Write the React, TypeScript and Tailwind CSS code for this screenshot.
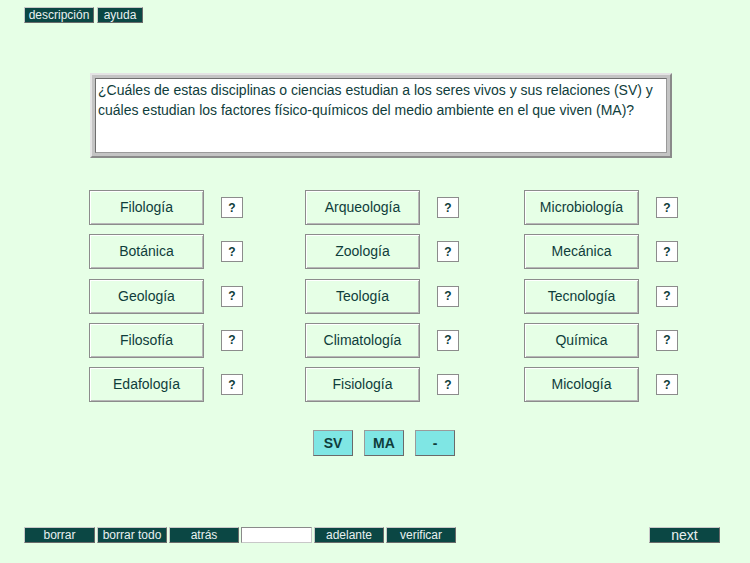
const rows: [string, string, string][] = [
  ['Filología', 'Arqueología', 'Microbiología'],
  ['Botánica', 'Zoología', 'Mecánica'],
  ['Geología', 'Teología', 'Tecnología'],
  ['Filosofía', 'Climatología', 'Química'],
  ['Edafología', 'Fisiología', 'Micología'],
];

const font = { fontFamily: '"Liberation Sans", Arial, sans-serif' };

function NavButton({ label, w }: { label: string; w: string }) {
  return (
    <div
      className={`${w} h-[16px] flex items-center justify-center bg-[#0b4744] text-[#e8f0f0] text-[12px] leading-none border border-t-[#c8c8c8] border-l-[#c8c8c8] border-b-[#6a6a6a] border-r-[#6a6a6a]`}
    >
      {label}
    </div>
  );
}

function Choice({ label }: { label: string }) {
  return (
    <div className="flex items-center gap-[17px]">
      <div className="w-[115px] h-[35px] flex items-center justify-center text-[14px] text-[#0f3d3b] border border-[#8c8c8c] shadow-[inset_1px_1px_0_#ffffff,inset_-1px_-1px_0_#b8b8b8]">
        {label}
      </div>
      <div className="w-[22px] h-[21px] flex items-center justify-center bg-white text-[12px] font-bold text-[#0f3d3b] border border-[#8c8c8c]">
        ?
      </div>
    </div>
  );
}

export default function App() {
  return (
    <div style={font} className="w-[750px] h-[563px] bg-[#e6ffe6] flex flex-col overflow-hidden">
      <div className="flex gap-[3px] pl-[24px] pt-[7px]">
        <NavButton label="descripción" w="w-[70px]" />
        <NavButton label="ayuda" w="w-[46px]" />
      </div>

      <div className="ml-[90px] mt-[50px] w-[582px] h-[85px] bg-[#c4c4c4] border-2 border-t-[#e4e4e4] border-l-[#e4e4e4] border-b-[#8a8a8a] border-r-[#8a8a8a] p-[3px]">
        <div className="h-full bg-white border border-t-[#6f6f6f] border-l-[#6f6f6f] border-b-[#9a9a9a] border-r-[#9a9a9a] px-[2px] pt-[1px] text-[14px] leading-[20px] text-[#0f3d3b] whitespace-nowrap">
          ¿Cuáles de estas disciplinas o ciencias estudian a los seres vivos y sus relaciones (SV) y
          <br />
          cuáles estudian los factores físico-químicos del medio ambiente en el que viven (MA)?
        </div>
      </div>

      <div className="ml-[89px] mt-[32px] flex flex-col gap-[9.25px]">
        {rows.map((r) => (
          <div key={r[0]} className="flex">
            <div className="w-[216px]">
              <Choice label={r[0]} />
            </div>
            <div className="w-[219px]">
              <Choice label={r[1]} />
            </div>
            <Choice label={r[2]} />
          </div>
        ))}
      </div>

      <div className="ml-[313px] mt-[28px] flex gap-[11px]">
        {['SV', 'MA', '-'].map((l) => (
          <div
            key={l}
            className="w-[40px] h-[26px] flex items-center justify-center bg-[#7fe6e4] text-[14px] font-bold text-[#0f3d3b] border border-t-[#9a9a9a] border-l-[#9a9a9a] border-b-[#6a6a6a] border-r-[#6a6a6a]"
          >
            {l}
          </div>
        ))}
      </div>

      <div className="mt-[71px] flex items-center pl-[24px]">
        <div className="flex gap-[2px]">
          <NavButton label="borrar" w="w-[71px]" />
          <NavButton label="borrar todo" w="w-[70px]" />
          <NavButton label="atrás" w="w-[70px]" />
          <div className="w-[71px] h-[16px] bg-white border border-t-[#8a8a8a] border-l-[#8a8a8a] border-b-[#c8c8c8] border-r-[#c8c8c8]" />
          <NavButton label="adelante" w="w-[70px]" />
          <NavButton label="verificar" w="w-[70px]" />
        </div>
        <div className="ml-[193px] w-[71px] h-[16px] flex items-center justify-center bg-[#0b4744] text-[#e8f0f0] text-[14px] leading-none border border-t-[#c8c8c8] border-l-[#c8c8c8] border-b-[#6a6a6a] border-r-[#6a6a6a]">
          next
        </div>
      </div>
    </div>
  );
}
